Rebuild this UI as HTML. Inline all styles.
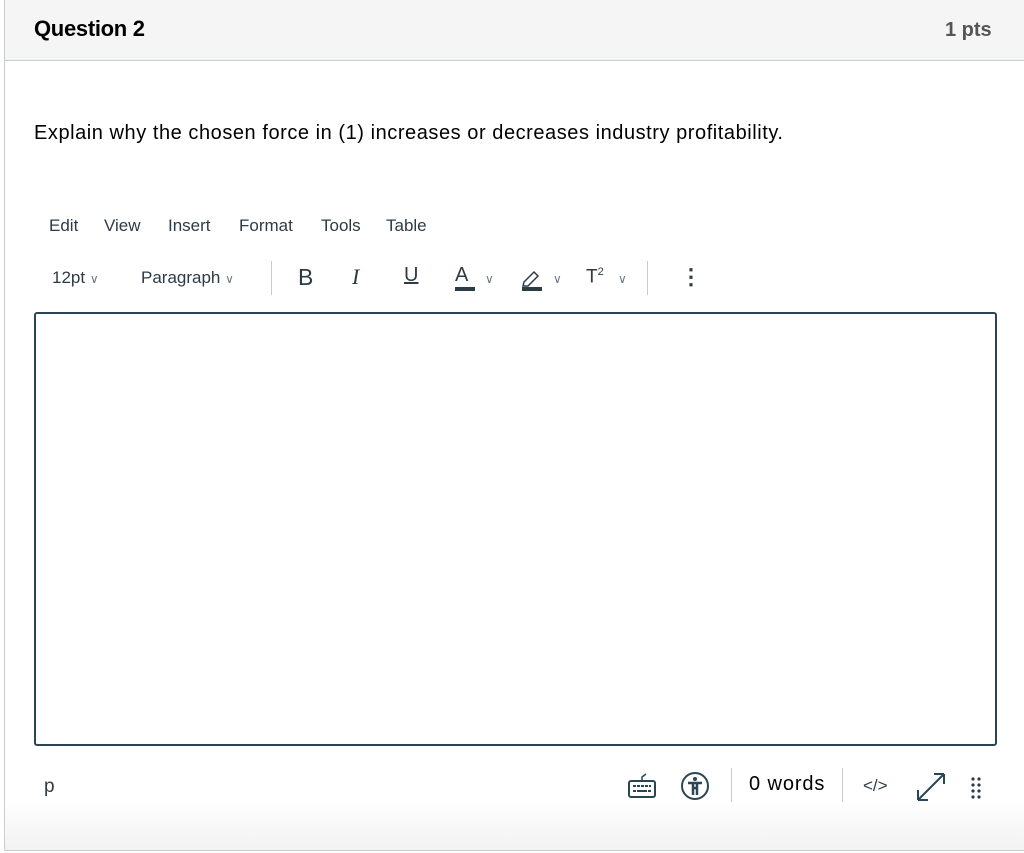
<!DOCTYPE html>
<html><head><meta charset="utf-8"><style>
*{box-sizing:border-box;margin:0;padding:0}
body{width:1024px;height:853px;background:#fff;font-family:"Liberation Sans",sans-serif;color:#2d3b45;position:relative;overflow:hidden}
.panel{position:absolute;left:4px;top:-2px;width:1030px;height:853px;border:1px solid #c7cdd1;border-right:none;background:linear-gradient(#fff 0,#fff 800px,#f2f2f2 850px)}
.hdr{position:absolute;left:5px;top:0;width:1019px;height:61px;background:#f5f5f5;border-bottom:1px solid #c7cdd1}
.t{position:absolute;white-space:nowrap}
.ed{position:absolute;left:34px;top:312px;width:963px;height:434px;border:2px solid #2a4553;border-radius:3px;background:#fff}
.sep{position:absolute;width:1px;background:#c7cdd1}
.chev{font-size:12px;color:#6b7780}
</style></head><body>
<div class="panel"></div>
<div class="hdr"></div>
<div class="t" style="left:34px;top:16px;font-size:22px;font-weight:bold;color:#000;letter-spacing:-0.3px">Question 2</div>
<div class="t" style="left:945px;top:19px;font-size:20px;font-weight:bold;color:#555">1 pts</div>
<div class="t" style="left:34px;top:122px;font-size:20px;color:#000;letter-spacing:0.55px">Explain why the chosen force in (1) increases or decreases industry profitability.</div>
<div class="t" style="left:49px;top:216px;font-size:17px">Edit</div>
<div class="t" style="left:104px;top:216px;font-size:17px">View</div>
<div class="t" style="left:168px;top:216px;font-size:17px">Insert</div>
<div class="t" style="left:239px;top:216px;font-size:17px">Format</div>
<div class="t" style="left:321px;top:216px;font-size:17px">Tools</div>
<div class="t" style="left:386px;top:216px;font-size:17px">Table</div>
<div class="t" style="left:52px;top:268px;font-size:17px">12pt <span class="chev">&#x2228;</span></div>
<div class="t" style="left:141px;top:268px;font-size:17px">Paragraph <span class="chev">&#x2228;</span></div>
<div class="sep" style="left:271px;top:261px;height:34px"></div>
<div class="t" style="left:298px;top:264px;font-size:23px;color:#2d3b45">B</div>
<div class="t" style="left:352px;top:264px;font-size:22px;font-family:'Liberation Serif',serif;font-style:italic">I</div>
<div class="t" style="left:404px;top:264px;font-size:20px;text-decoration:underline">U</div>
<div class="t" style="left:455px;top:264px;font-size:20px">A</div>
<div style="position:absolute;left:455px;top:287px;width:20px;height:4px;background:#2d3b45"></div>
<div class="t chev" style="left:485px;top:272px">&#x2228;</div>
<svg style="position:absolute;left:520px;top:266px" width="24" height="26" viewBox="0 0 24 26"><path d="M4 16 L14 6 L18 10 L8 20 L3 20 Z" fill="none" stroke="#2d3b45" stroke-width="1.5"/><rect x="2" y="21" width="20" height="4" fill="#2d3b45"/></svg>
<div class="t chev" style="left:553px;top:272px">&#x2228;</div>
<div class="t" style="left:586px;top:266px;font-size:19px">T<sup style="font-size:11px">2</sup></div>
<div class="t chev" style="left:618px;top:272px">&#x2228;</div>
<div class="sep" style="left:647px;top:261px;height:34px"></div>
<div class="t" style="left:680px;top:264px;font-size:22px;font-weight:bold">&#8942;</div>
<div class="ed"></div>
<div class="t" style="left:44px;top:776px;font-size:19px">p</div>
<svg style="position:absolute;left:627px;top:772px" width="30" height="28" viewBox="0 0 30 28"><rect x="2" y="9" width="26" height="16" rx="2" fill="none" stroke="#2a4553" stroke-width="2"/><path d="M15 9 V5 L19 2" fill="none" stroke="#2a4553" stroke-width="1.5"/><g fill="#2a4553"><rect x="6" y="13" width="3" height="2"/><rect x="10" y="13" width="3" height="2"/><rect x="14" y="13" width="3" height="2"/><rect x="18" y="13" width="3" height="2"/><rect x="22" y="13" width="2" height="2"/><rect x="6" y="18" width="3" height="2"/><rect x="10" y="18" width="10" height="2"/><rect x="21" y="18" width="3" height="2"/></g></svg>
<svg style="position:absolute;left:680px;top:771px" width="30" height="30" viewBox="0 0 30 30"><circle cx="15" cy="15" r="13" fill="none" stroke="#2a4553" stroke-width="2"/><circle cx="15" cy="8" r="2" fill="#2a4553"/><path d="M8 12 H22 M13 12 V24 M17 12 V24 M13 17 H17" stroke="#2a4553" stroke-width="2.5" fill="none"/></svg>
<div class="sep" style="left:731px;top:768px;height:34px"></div>
<div class="t" style="left:749px;top:773px;font-size:20px;color:#000;letter-spacing:0.9px">0 words</div>
<div class="sep" style="left:842px;top:768px;height:34px"></div>
<div class="t" style="left:863px;top:776px;font-size:17px">&lt;/&gt;</div>
<svg style="position:absolute;left:915px;top:771px" width="32" height="32" viewBox="0 0 32 32"><path d="M3 29 L29 3 M3 29 V19 M3 29 H13 M29 3 H19 M29 3 V13" stroke="#2a4553" stroke-width="2" fill="none"/></svg>
<svg style="position:absolute;left:970px;top:776px" width="14" height="24"><g fill="#2d3b45"><circle cx="3" cy="3" r="1.6"/><circle cx="9" cy="3" r="1.6"/><circle cx="3" cy="9" r="1.6"/><circle cx="9" cy="9" r="1.6"/><circle cx="3" cy="15" r="1.6"/><circle cx="9" cy="15" r="1.6"/><circle cx="3" cy="21" r="1.6"/><circle cx="9" cy="21" r="1.6"/></g></svg>
</body></html>
